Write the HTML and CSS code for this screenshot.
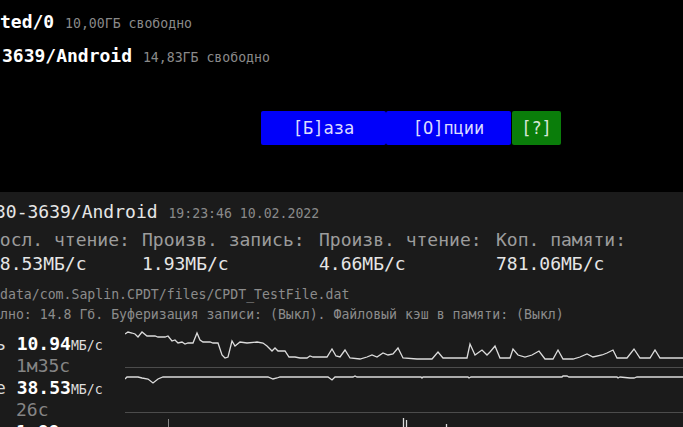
FILE: index.html
```html
<!DOCTYPE html>
<html lang="ru">
  <head>
    <meta charset="UTF-8" />
    <meta name="viewport" content="width=device-width, initial-scale=1.0" />
    <title>CPDT</title>
    <link rel="stylesheet" href="styles.css">
  </head>
  <body>
    <main class="screen">
      <section class="drives">
        <div class="drive drive-first">
          <b>ted/0</b> <span>10,00ГБ свободно</span>
        </div>
        <div class="drive drive-second">
          <b>3639/Android</b> <span>14,83ГБ свободно</span>
        </div>

        <nav class="menu">
          <button class="menu-item">[Б]аза</button>
          <button class="menu-item">[О]пции</button>
          <button class="menu-item menu-help">[?]</button>
        </nav>
      </section>

      <section class="test">
        <h2 class="test-title">
          30-3639/Android <span>19:23:46 10.02.2022</span>
        </h2>

        <div class="stats">
          <span class="stat-label">Посл. чтение:</span>
          <span class="stat-label">Произв. запись:</span>
          <span class="stat-label">Произв. чтение:</span>
          <span class="stat-label">Коп. памяти:</span>
          <span class="stat-value">38.53МБ/с</span>
          <span class="stat-value">1.93МБ/с</span>
          <span class="stat-value">4.66МБ/с</span>
          <span class="stat-value">781.06МБ/с</span>
        </div>

        <p class="note note-path">data/com.Saplin.CPDT/files/CPDT_TestFile.dat</p>
        <p class="note">лно: 14.8 Гб. Буферизация записи: (Выкл). Файловый кэш в памяти: (Выкл)</p>

        <div class="chart">
          <div class="legend">
            <div class="rate rate-cut">ь <b>10.94</b><small>МБ/с</small></div>
            <div class="time">1м35с</div>
            <div class="rate rate-cut">е <b>38.53</b><small>МБ/с</small></div>
            <div class="time">26с</div>
            <div class="rate"><b>1.88</b><small>МБ/с</small></div>
          </div>

          <div class="plots">
            <svg class="plot" viewBox="0 1 558 44" preserveAspectRatio="none">
              <polyline
                points="0,12 3,10 7,11 10,12 13,15 17,10 22,14 30,14 33,15 40,15 43,14 47,19 50,18 53,21 57,20 60,22 63,21 68,21 72,11 75,18 78,20 85,20 88,21 93,21 97,33 100,36 103,35 107,19 110,24 115,20 122,21 132,20 138,21 142,24 147,29 150,26 153,29 160,29 164,35 170,35 175,36 182,36 185,34 188,35 202,35 207,27 211,34 215,35 220,28 225,36 235,37 242,35 247,33 252,35 258,31 263,33 268,32 273,26 278,36 292,37 307,37 313,30 318,36 342,36 345,22 350,33 357,28 362,33 365,30 370,24 375,36 385,36 388,27 393,33 400,35 407,33 414,29 420,37 428,37 433,28 438,37 448,37 455,35 462,32 468,35 477,33 482,31 488,28 492,36 502,36 509,27 515,36 525,36 530,28 535,36 558,36"
              />
            </svg>
            <svg class="plot" viewBox="0 1 558 44" preserveAspectRatio="none">
              <polyline
                points="0,12 2,10 13,10 17,11 23,12 28,16 33,12 38,10 143,10 148,12 152,11 155,10 203,10 207,13 210,10 228,10 230,9 232,10 296,10 297,11 298,10 343,10 344,11 346,10 437,10 438,9 442,9 444,10 450,10 492,10 493,11 495,10 505,11 509,11 512,10 558,10"
              />
            </svg>
            <svg class="plot" viewBox="0 1 558 44" preserveAspectRatio="none">
              <line class="tick" x1="43.5" y1="7" x2="43.5" y2="16" />
              <line x1="278.5" y1="6" x2="278.5" y2="16" />
              <line x1="281.5" y1="8" x2="281.5" y2="16" />
              <line x1="321.5" y1="12" x2="321.5" y2="16" />
            </svg>
          </div>
        </div>
      </section>
    </main>
  </body>
</html>
```

FILE: styles.css
```css
body {
  margin: 0;
  padding: 0;
  overflow: hidden;
  background-color: #000;
}
.screen {
  width: 683px;
  height: 427px;
  overflow: hidden;
  font-family: "DejaVu Sans Mono", "Liberation Mono", monospace;
  font-size: 18px;
  color: #e6e6e6;
}

/* drives list + main menu */
.drives {
  height: 192px;
  box-sizing: border-box;
  padding-top: 5px;
  background-color: #000;
}
.drive {
  line-height: 34px;
  white-space: nowrap;
}
.drive b {
  color: #fff;
}
.drive span {
  font-size: 13.2px;
  line-height: 1;
  color: #8a8a8a;
}
.drive-second {
  padding-left: 2px;
}
.menu {
  display: flex;
  margin: 38px 0 0 261px;
}
.menu-item {
  width: 125px;
  height: 34px;
  padding: 0;
  border: none;
  border-radius: 2px;
  font-family: inherit;
  font-size: 17px;
  color: #dcdcff;
  background-color: #0000fa;
}
.menu-item.menu-help {
  width: 49px;
  margin-left: 1px;
  color: #d6e8d6;
  background-color: #0a7d0a;
}

/* current test panel */
.test {
  height: 235px;
  padding-top: 6px;
  box-sizing: border-box;
  background-color: #1b1b1b;
}
.test-title {
  margin: 0 0 0 -5px;
  font-size: 18px;
  font-weight: normal;
  line-height: 28px;
  white-space: nowrap;
  color: #e6e6e6;
}
.test-title span {
  font-size: 13.2px;
  line-height: 1;
  color: #8a8a8a;
}
.stats {
  display: grid;
  grid-template-columns: 153px 177px 177px 177px;
  margin: 2px 0 0 -11px;
  white-space: nowrap;
}
.stat-label {
  line-height: 24px;
  color: #9c9c9c;
}
.stat-value {
  line-height: 24px;
  color: #e6e6e6;
}
.note {
  margin: 0;
  font-size: 13.2px;
  line-height: 20px;
  white-space: nowrap;
  color: #8c8c8c;
}
.note-path {
  margin-top: 9px;
}

/* speed charts */
.chart {
  display: flex;
  margin-top: -2px;
}
.legend {
  width: 125px;
  flex-shrink: 0;
  padding-top: 10px;
  box-sizing: border-box;
  white-space: nowrap;
}
.rate,
.time {
  line-height: 22px;
  padding-left: 16px;
}
.rate {
  color: #d8d8d8;
}
.rate-cut {
  margin-left: -21px;
}
.rate b {
  color: #fff;
}
.rate small {
  font-size: 13.2px;
  line-height: 1;
  color: #dedede;
}
.time {
  color: #858585;
}
.plots {
  flex: 1;
}
.plot {
  display: block;
  width: 558px;
  height: 44px;
  border-bottom: 1px solid #4c4c4c;
  fill: none;
  stroke: #dcdcdc;
  stroke-width: 1.3;
}
.plot .tick {
  stroke: #8a8a8a;
  stroke-width: 1;
}
```
